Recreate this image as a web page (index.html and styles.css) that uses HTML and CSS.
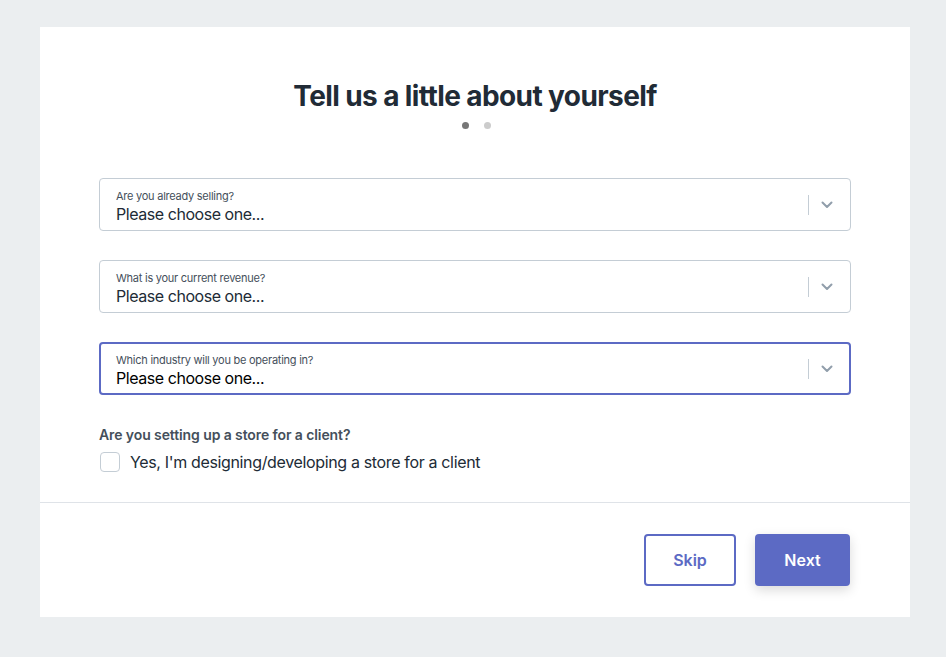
FILE: index.html
```html
<!DOCTYPE html>
<html lang="en">
<head>
<meta charset="utf-8">
<title>Tell us a little about yourself</title>
<link rel="stylesheet" href="styles.css">
</head>
<body>
<div class="page">
  <main class="card">
    <section class="card-body">
      <h1 class="title">Tell us a little about yourself</h1>
      <div class="dots">
        <span class="dot dot-active"></span>
        <span class="dot"></span>
      </div>
      <div class="fields">
        <div class="select">
          <div class="select-text">
            <span class="select-label">Are you already selling?</span>
            <span class="select-value">Please choose one...</span>
          </div>
          <span class="select-sep"></span>
          <svg class="chevron" width="12" height="8" viewBox="0 0 12 8"><path d="M1.5 1.5 L6 6 L10.5 1.5" fill="none" stroke="#919eab" stroke-width="2" stroke-linecap="round" stroke-linejoin="round"/></svg>
        </div>
        <div class="select">
          <div class="select-text">
            <span class="select-label">What is your current revenue?</span>
            <span class="select-value">Please choose one...</span>
          </div>
          <span class="select-sep"></span>
          <svg class="chevron" width="12" height="8" viewBox="0 0 12 8"><path d="M1.5 1.5 L6 6 L10.5 1.5" fill="none" stroke="#919eab" stroke-width="2" stroke-linecap="round" stroke-linejoin="round"/></svg>
        </div>
        <div class="select select-focused">
          <div class="select-text">
            <span class="select-label">Which industry will you be operating in?</span>
            <span class="select-value select-value-dark">Please choose one...</span>
          </div>
          <span class="select-sep"></span>
          <svg class="chevron" width="12" height="8" viewBox="0 0 12 8"><path d="M1.5 1.5 L6 6 L10.5 1.5" fill="none" stroke="#919eab" stroke-width="2" stroke-linecap="round" stroke-linejoin="round"/></svg>
        </div>
      </div>
      <div class="client">
        <p class="client-q">Are you setting up a store for a client?</p>
        <label class="check-row">
          <span class="checkbox"></span>
          <span class="check-text">Yes, I'm designing/developing a store for a client</span>
        </label>
      </div>
    </section>
    <footer class="card-footer">
      <button class="btn btn-outline">Skip</button>
      <button class="btn btn-primary">Next</button>
    </footer>
  </main>
</div>
</body>
</html>
```

FILE: styles.css
```css
html, body {
  margin: 0;
  padding: 0;
}
body {
  background: #ebeef0;
  font-family: Inter, "Noto Sans", "Liberation Sans", sans-serif;
  color: #212b36;
}
.page {
  padding: 27px 36px 40px 40px;
}
.card {
  width: 870px;
  background: #ffffff;
}
.card-body {
  padding: 53px 59px 30px 59px;
  border-bottom: 1px solid #dfe3e8;
}
.title {
  margin: 0;
  text-align: center;
  font-size: 28px;
  line-height: 32px;
  font-weight: 700;
  color: #212b36;
  letter-spacing: -0.6px;
}
.dots {
  display: flex;
  justify-content: center;
  gap: 15px;
  margin-top: 10px;
  padding-left: 3px;
}
.dot {
  width: 7px;
  height: 7px;
  border-radius: 50%;
  background: #cccccc;
}
.dot-active {
  background: #777777;
}
.fields {
  margin-top: 49px;
  display: flex;
  flex-direction: column;
  gap: 29px;
}
.select {
  height: 53px;
  box-sizing: border-box;
  border: 1px solid #c4cdd5;
  border-radius: 4px;
  display: flex;
  align-items: center;
  padding: 0 17px 0 16px;
}
.select-focused {
  border: 2px solid #5c6ac4;
  padding: 0 16px 0 15px;
}
.select-text {
  flex: 1;
  display: flex;
  flex-direction: column;
  padding-top: 3px;
}
.select-label {
  font-size: 11px;
  line-height: 16px;
  color: #454f5b;
  letter-spacing: -0.25px;
}
.select-value {
  font-size: 16px;
  line-height: 20px;
  color: #212b36;
  letter-spacing: -0.45px;
}
.select-value-dark {
  color: #000000;
}
.select-sep {
  width: 1px;
  height: 20px;
  background: #c4cdd5;
  margin-right: 12px;
  margin-top: 1px;
}
.chevron {
  display: block;
}
.client {
  margin-top: 31px;
}
.client-q {
  margin: 0;
  font-size: 14px;
  line-height: 18px;
  font-weight: 600;
  color: #454f5b;
  letter-spacing: -0.1px;
}
.check-row {
  margin-top: 8px;
  display: flex;
  align-items: center;
  gap: 10px;
}
.checkbox {
  width: 18px;
  height: 18px;
  border: 1px solid #c4cdd5;
  border-radius: 4px;
  background: #fff;
  margin-left: 1px;
}
.check-text {
  font-size: 16px;
  line-height: 20px;
  color: #212b36;
  letter-spacing: -0.35px;
}
.card-footer {
  display: flex;
  justify-content: flex-end;
  gap: 19px;
  padding: 31px 60px 31px 0;
}
.btn {
  font-family: Inter, "Noto Sans", "Liberation Sans", sans-serif;
  font-size: 16px;
  font-weight: 600;
  border-radius: 4px;
  cursor: pointer;
}
.btn-outline {
  width: 92px;
  height: 52px;
  background: #fff;
  border: 2px solid #5c6ac4;
  color: #5c6ac4;
}
.btn-primary {
  width: 95px;
  height: 52px;
  background: #5c6ac4;
  border: none;
  color: #fff;
  box-shadow: 0 4px 12px rgba(0, 0, 0, 0.15);
}
```
